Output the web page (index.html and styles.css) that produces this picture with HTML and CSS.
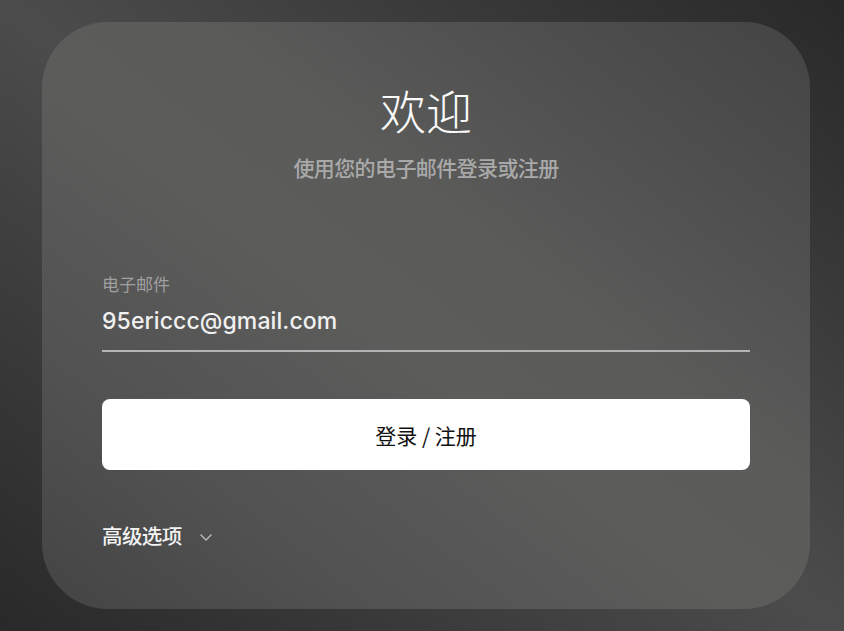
FILE: index.html
```html
<!DOCTYPE html>
<html lang="zh-CN">
<head>
<meta charset="utf-8">
<title>欢迎</title>
<link rel="stylesheet" href="styles.css">
</head>
<body>
<main class="page">
  <section class="card">
    <h1 class="title">欢迎</h1>
    <p class="subtitle">使用您的电子邮件登录或注册</p>
    <form class="form">
      <label class="field">
        <span class="field-label">电子邮件</span>
        <span class="field-value">95ericcc@gmail.com</span>
      </label>
      <button type="button" class="submit">登录 / 注册</button>
      <div class="advanced">
        <span>高级选项</span>
        <svg class="chevron" width="14" height="10" viewBox="0 0 14 10" aria-hidden="true">
          <path d="M1.5 2.5 L7 8 L12.5 2.5" fill="none" stroke="#bdbdbd" stroke-width="1.3"/>
        </svg>
      </div>
    </form>
  </section>
</main>
</body>
</html>
```

FILE: styles.css
```css
* { box-sizing: border-box; }

html, body {
  margin: 0;
  height: 100%;
}

body {
  font-family: "Noto Sans CJK SC", "Noto Sans", sans-serif;
  background: linear-gradient(to top right, #292929 0%, #3a3a3a 25%, #4c4c4c 50%, #3a3a3a 75%, #292929 100%);
  color: #fff;
}

.page {
  height: 631px;
  padding: 22px 34px 22px 42px;
}

.card {
  width: 768px;
  height: 587px;
  border-radius: 66px;
  background: linear-gradient(to top right, #444444 0%, #525252 22%, #5c5c5b 45%, #5b5b5a 60%, #4f4f4f 80%, #444444 100%);
  padding: 55px 60px 0;
  display: flex;
  flex-direction: column;
  align-items: stretch;
}

.title {
  margin: 0;
  text-align: center;
  font-weight: 300;
  font-size: 46px;
  line-height: 64px;
  color: #fafafa;
}

.subtitle {
  margin: 12px 0 0;
  text-align: center;
  font-size: 21px;
  font-weight: 500;
  line-height: 28px;
  color: #a9a9a9;
  letter-spacing: -0.6px;
}

.form {
  margin-top: 92px;
  display: flex;
  flex-direction: column;
}

.field {
  display: flex;
  flex-direction: column;
  border-bottom: 2px solid #b4b4b4;
  padding-bottom: 14px;
}

.field-label {
  font-size: 17px;
  line-height: 22px;
  color: #a0a0a0;
}

.field-value {
  margin-top: 11px;
  font-family: "Inter", "Noto Sans", sans-serif;
  font-weight: 500;
  font-size: 23px;
  line-height: 30px;
  letter-spacing: 0.1px;
  color: #f0f0f0;
}

.submit {
  margin-top: 47px;
  height: 71px;
  border: none;
  border-radius: 8px;
  background: #ffffff;
  font-family: "Noto Sans CJK SC", "Noto Sans", sans-serif;
  font-size: 21px;
  color: #111;
  cursor: pointer;
}

.advanced {
  margin-top: 51px;
  display: flex;
  align-items: center;
  gap: 17px;
  font-size: 20.5px;
  font-weight: 500;
  line-height: 28px;
  color: #f2f2f2;
  letter-spacing: -0.6px;
}

.chevron {
  margin-top: 4px;
}
```
